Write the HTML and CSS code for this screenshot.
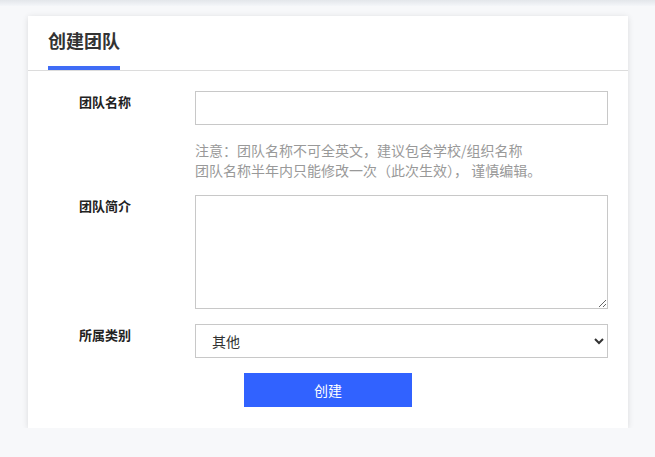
FILE: index.html
```html
<!DOCTYPE html>
<html lang="zh-CN">
<head>
  <meta charset="UTF-8" />
  <title>创建团队</title>
  <link rel="stylesheet" href="styles.css">
</head>
<body>
  <div class="topbar"></div>
  <div class="card">
    <div class="card-head">
      <h2 class="tab">创建团队</h2>
    </div>
    <form class="team-form">
      <div class="row">
        <label class="label" for="team-name">团队名称</label>
        <div class="field">
          <input type="text" id="team-name" class="input" />
          <p class="tip">注意：团队名称不可全英文，建议包含学校/组织名称<br>团队名称半年内只能修改一次（此次生效）， 谨慎编辑。</p>
        </div>
      </div>
      <div class="row">
        <label class="label" for="team-desc">团队简介</label>
        <div class="field">
          <textarea id="team-desc" class="textarea"></textarea>
        </div>
      </div>
      <div class="row">
        <label class="label" for="team-type">所属类别</label>
        <div class="field">
          <select id="team-type" class="select">
            <option>其他</option>
          </select>
        </div>
      </div>
      <div class="actions">
        <button type="submit" class="btn">创建</button>
      </div>
    </form>
  </div>
</body>
</html>
```

FILE: styles.css
```css
body {
  margin: 0;
  background: #f7f8fa;
  font-family: "Noto Sans CJK SC", "Noto Sans", sans-serif;
  color: #333;
}
.topbar {
  height: 6px;
  background: linear-gradient(#e3e6ea, #f4f6f9);
  margin-bottom: 10px;
}
.card {
  width: 600px;
  margin-left: 28px;
  background: #fff;
  box-shadow: 0 1px 6px rgba(0, 0, 0, 0.12);
}
.card-head {
  border-bottom: 1px solid #dcdcdc;
  padding: 0 20px;
  height: 54px;
  display: flex;
  align-items: flex-end;
}
.tab {
  margin: 0;
  font-size: 18px;
  font-weight: bold;
  color: #333;
  line-height: 24px;
  padding-bottom: 14px;
  width: 72px;
  border-bottom: 4px solid #3f6cf6;
}
.team-form {
  padding: 20px 20px 21px 51px;
}
.row {
  display: flex;
  margin-bottom: 15px;
}
.label {
  width: 116px;
  flex: none;
  font-size: 13px;
  font-weight: bold;
  line-height: 20px;
  padding-top: 1px;
  color: #222;
}
.field {
  flex: 1;
}
.input, .textarea, .select {
  display: block;
  box-sizing: border-box;
  width: 413px;
  border: 1px solid #c8c8c8;
  background: #fff;
  margin: 0;
  font-family: inherit;
  font-size: 14px;
  color: #333;
}
.input {
  height: 34px;
  padding: 0 10px;
}
.tip {
  margin: 15px 0 0;
  font-size: 14px;
  line-height: 20px;
  color: #999;
}
.textarea {
  height: 114px;
  resize: vertical;
}
.select {
  height: 34px;
  padding: 0 12px;
}
.actions {
  display: flex;
  justify-content: center;
  margin-left: -31px;
}
.btn {
  width: 168px;
  height: 34px;
  border: none;
  background: #3162ff;
  color: #fff;
  font-family: inherit;
  font-size: 14px;
}
```
